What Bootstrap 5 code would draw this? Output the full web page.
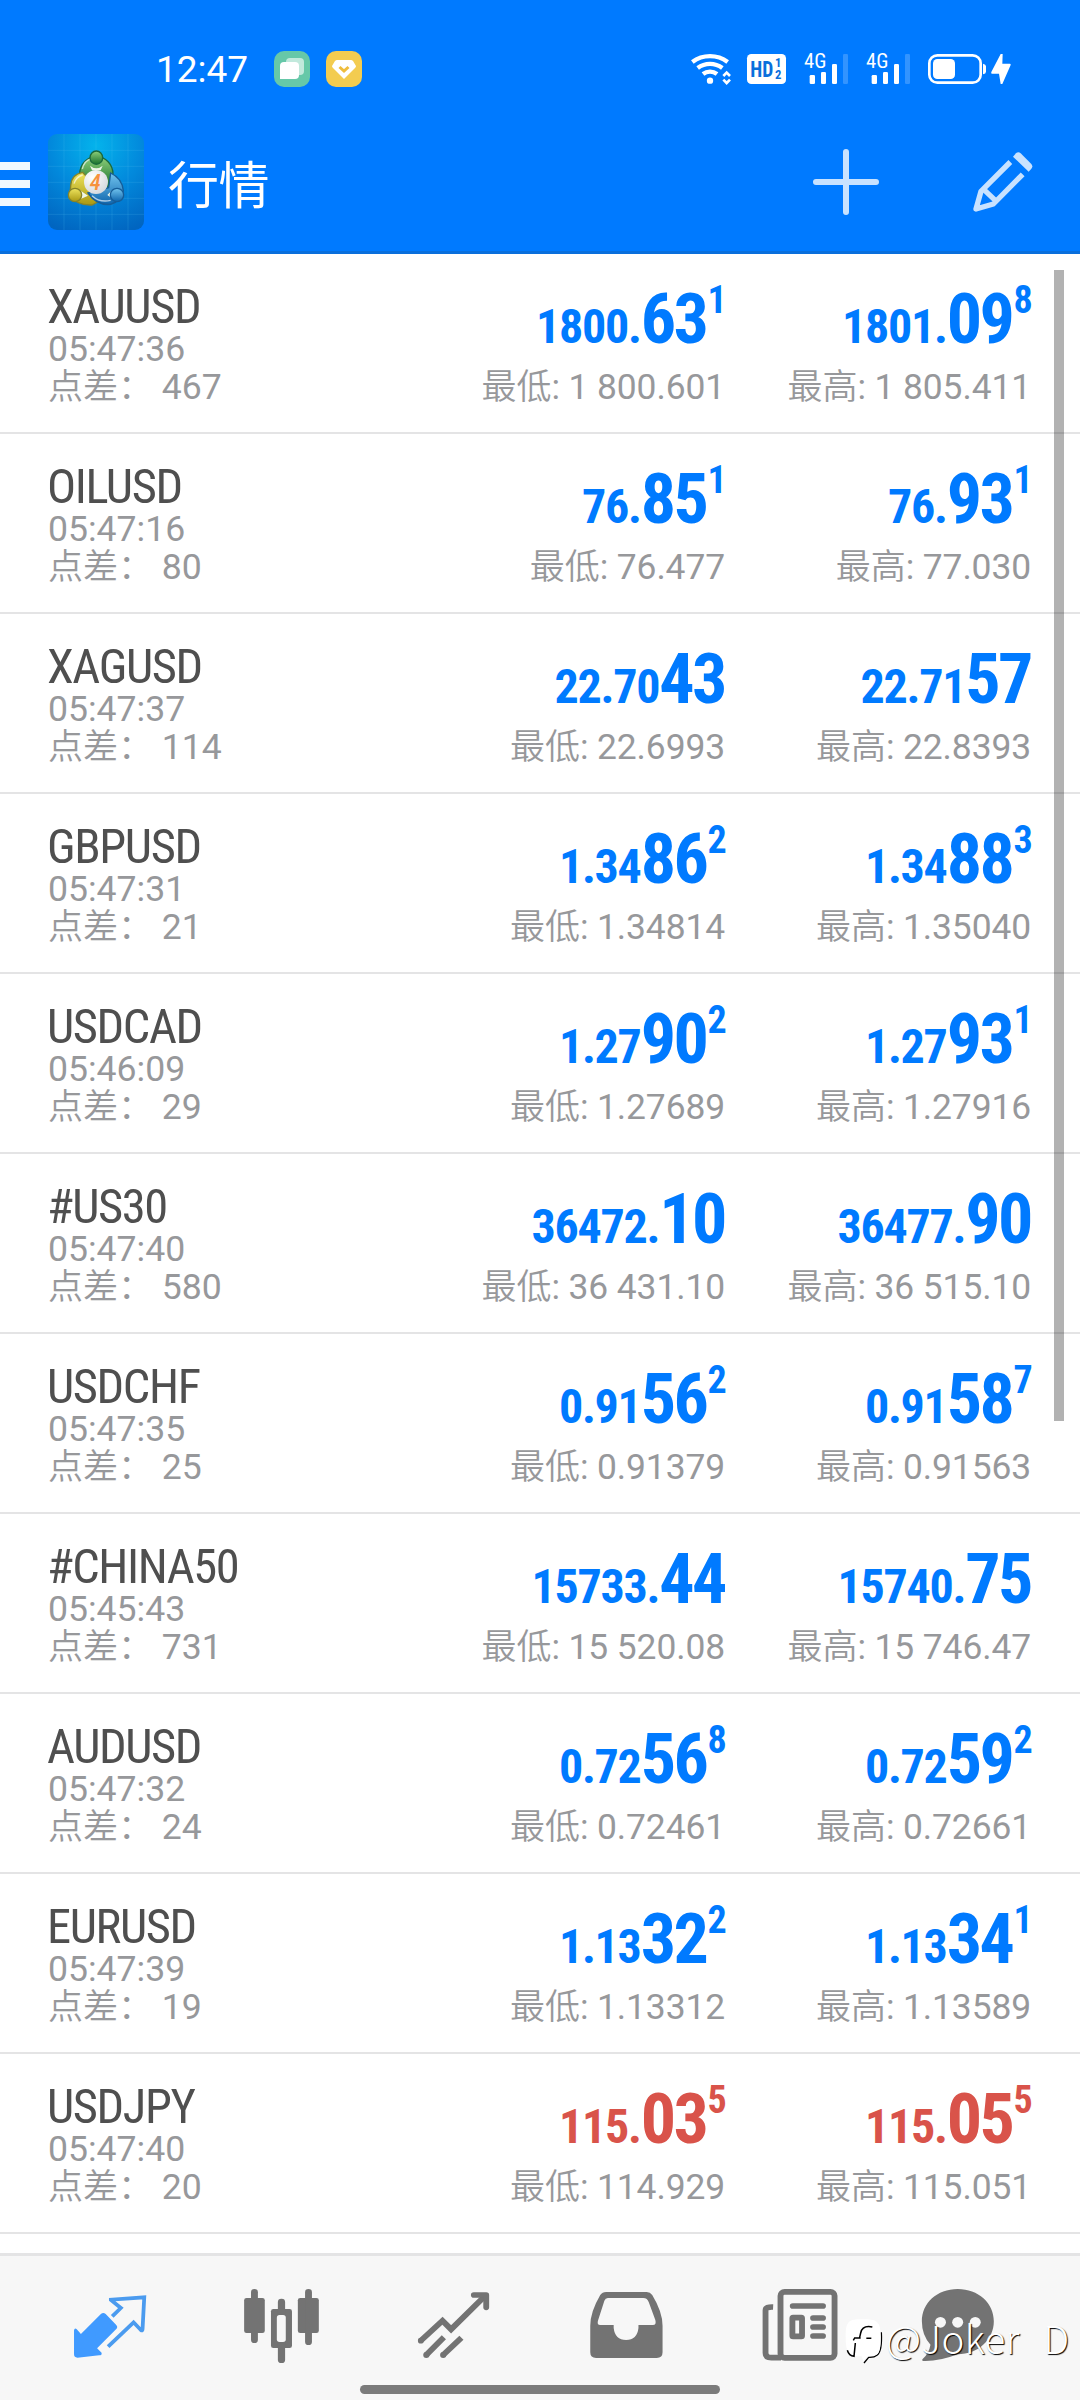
<!DOCTYPE html>
<html lang="zh-CN">
<head>
<meta charset="utf-8">
<meta name="viewport" content="width=device-width, initial-scale=1">
<title>行情</title>
<link href="https://cdn.jsdelivr.net/npm/bootstrap@5.3.0/dist/css/bootstrap.min.css" rel="stylesheet">
<style>
body{font-family:Roboto,"Noto Sans CJK SC",sans-serif;width:1080px;height:2400px;overflow:hidden;background:#fff;color:#97989b}
svg{display:block;flex:none;overflow:visible}
.topbar{background:#007aff;border-bottom:3px solid #0a6fdc;height:254px;color:#fff}
.statusbar{height:113px;padding:45px 66px 0 156px}
.clock{font-size:37px;line-height:49px;width:118px}
.titlebar{height:138px}
.page-title{font:400 51px/60px "Noto Sans CJK SC",sans-serif;margin-left:24px;letter-spacing:-.5px}
.quotes{height:1999px;overflow:hidden}
.quote{height:180px;border-bottom:2px solid #e4e4e5;padding:0 49px 0 48px;font-size:35.6px;line-height:38px;white-space:nowrap}
.sym{font-stretch:75%;font-size:48.5px;line-height:47px;letter-spacing:-1.4px;color:#4f4f4f;padding-top:29px;margin-left:-1px}
.cn{font-size:35px;font-weight:350}
.quote-col{width:306px}
.quote-col .range{font-size:35.4px;letter-spacing:-.1px;line-height:39px}
.spread{white-space:pre;line-height:39px}
.price{color:#007aff;font-stretch:75%;font-weight:700;font-size:48px;line-height:79px;letter-spacing:-1.25px;padding-top:33px;margin-bottom:2px}
.price b{font-size:70px;line-height:0;letter-spacing:-2.5px;font-weight:700}
.price i{font-style:normal;font-size:38px;line-height:0;vertical-align:30px;letter-spacing:-1.6px;margin-left:1px}
.down .price{color:#d9534a}
.thumb{right:16px;top:16px;width:10px;height:1151px;background:rgba(0,0,0,.3)}
.tabs{height:147px;border-top:3px solid #e4e4e5;background:#f7f7f7;padding:24px 24px 0;color:#737373}
.tab-item{width:172px}
.homebar{left:360px;top:129px;width:360px;height:9px;border-radius:5px;background:#7b7b7b}
.wmark{left:844px;top:63px;color:#fff;font:300 38.5px/48px "Noto Sans CJK SC",sans-serif;text-shadow:1px 1px 1px #000;white-space:pre}
.wmark span{margin:-9px 0 0 -3px;letter-spacing:.3px;word-spacing:3px}
</style>
<script src="https://cdn.jsdelivr.net/npm/bootstrap@5.3.0/dist/js/bootstrap.bundle.min.js"></script>
</head>
<body class="position-relative">
<header class="topbar">
  <div class="statusbar d-flex align-items-start">
    <div class="clock">12:47</div>
    <svg width="36" height="36" viewBox="0 0 36 36" style="margin-top:6px"><rect width="36" height="36" rx="10" fill="#66c8a8"/><rect x="12" y="7" width="18" height="17" rx="4" fill="#fff" opacity=".6"/><path d="M6 28V15a4 4 0 0 1 4-4h11a4 4 0 0 1 4 4v9a4 4 0 0 1-4 4z" fill="#fff"/></svg>
    <svg class="ms-3" width="36" height="36" viewBox="0 0 36 36" style="margin-top:6px"><rect width="36" height="36" rx="10" fill="#f3cc50"/><path d="M11 9h14q1 0 2 1l3 5q0 1-1 2L18 28 7 17q-1-1-1-2l3-5q1-1 2-1z" fill="#fff"/><path d="M13.500 16l4.500 4 4.500-4" fill="none" stroke="#efbd3c" stroke-width="3"/></svg>
    <div class="d-flex ms-auto">
      <svg width="55" height="50" viewBox="30 0 165 150" fill="none" stroke="#fff" stroke-width="13"><path d="M37 51a88 88 0 0 1 106 0M53 69a62 62 0 0 1 74 0M69 87a34 34 0 0 1 42 0"/><circle cx="90" cy="107" r="9.500" fill="#fff" stroke="none"/><path d="M130 93l10-10 10 10M130 104l10 10 10-10" stroke-width="8"/></svg>
      <svg width="55" height="50" viewBox="195 0 165 150"><rect x="201" y="27" width="117" height="90" rx="13" fill="#fff"/><g fill="#0a6fdc" font-family="Roboto" font-weight="700" style="font-stretch:75%"><text x="211" y="96" font-size="67" textLength="69" lengthAdjust="spacingAndGlyphs">HD</text><text x="285" y="66" font-size="38">1</text><text x="285" y="102" font-size="38">2</text></g></svg>
      <svg width="62" height="50" viewBox="360 0 186 150" fill="#fff"><text x="372" y="70" font-family="Roboto" font-size="60" style="font-stretch:75%" textLength="67" lengthAdjust="spacingAndGlyphs">4G</text><rect x="389" y="90" width="16" height="27" rx="4"/><rect x="423" y="81" width="15" height="36" rx="4"/><rect x="456" y="57" width="15" height="60" rx="4"/><rect x="489" y="27" width="15" height="90" rx="4" opacity=".2"/></svg>
      <svg width="62" height="50" viewBox="360 0 186 150" fill="#fff"><text x="372" y="70" font-family="Roboto" font-size="60" style="font-stretch:75%" textLength="67" lengthAdjust="spacingAndGlyphs">4G</text><rect x="389" y="90" width="16" height="27" rx="4"/><rect x="423" y="81" width="15" height="36" rx="4"/><rect x="456" y="57" width="15" height="60" rx="4"/><rect x="489" y="27" width="15" height="90" rx="4" opacity=".2"/></svg>
      <svg width="90" height="50" viewBox="732 0 270 150" fill="#fff"><rect x="748" y="31" width="154" height="82" rx="24" fill="none" stroke="#fff" stroke-width="8"/><rect x="759" y="42" width="66" height="60" rx="13"/><path d="M909 56q9 2 9 8v16q0 6-9 8zM962 27l-28 54q-2 5 2 5h21l5 31h5l25-57q1-4-3-4h-22l1-29z"/></svg>
    </div>
  </div>
  <div class="titlebar d-flex align-items-center">
    <svg width="48" height="44" viewBox="0 0 48 44" fill="#f0f8ff"><path d="M0 2h30v8H0zM0 20h30v8H0zM0 38h30v8H0z"/></svg>
    <svg width="96" height="96" viewBox="24 27 288 288">
      <defs>
        <radialGradient id="sky" cx=".5" cy=".12" r=".95"><stop offset="0" stop-color="#04b3ec"/><stop offset=".5" stop-color="#0289dc"/><stop offset="1" stop-color="#0165c0"/></radialGradient>
        <linearGradient id="gr" x2="0" y2="1"><stop stop-color="#8fd07b"/><stop offset="1" stop-color="#17702c"/></linearGradient>
        <linearGradient id="ye" x2="0" y2="1"><stop stop-color="#eee45e"/><stop offset="1" stop-color="#a99812"/></linearGradient>
        <linearGradient id="bl" x2="0" y2="1"><stop stop-color="#72c4ee"/><stop offset="1" stop-color="#0e65ad"/></linearGradient>
        <radialGradient id="ball" cx=".35" cy=".3" r=".75"><stop offset="0" stop-color="#fff"/><stop offset="1" stop-color="#d4d8dd"/></radialGradient>
      </defs>
      <rect x="24" y="27" width="288" height="288" rx="27" fill="url(#sky)"/>
      <path d="M72 27v288M120 27v288M168 27v288M216 27v288M264 27v288M24 76h288M24 124h288M24 172h288M24 220h288M24 268h288" stroke="#5cc6f5" stroke-opacity=".18" stroke-width="3"/>
      <g stroke-width="4">
        <path d="M119 148a49 52 0 1 1 100 0q-2 26-14 38l-72-14q-14-8-14-24z" fill="url(#gr)" stroke="#1b6a3c"/>
        <path d="M128 142q-34 6-36 40l-2 30q20 30 66 28l26-14-38-66z" fill="url(#ye)" stroke="#85832a"/>
        <path d="M212 144q34 16 38 52-4 30-38 42-42 4-68-34l62-16z" fill="url(#bl)" stroke="#155d99"/>
        <path d="M127 132q6-26 26-30M102 176q6-20 26-26M156 212q24 22 56 14" fill="none" stroke="#fff" stroke-opacity=".65"/>
        <path d="M150 122q19 16 38 0l-6 14h-26zM120 196l24 16-22 10zM216 196l-14 14 12 8z" fill="#eef6e8" stroke="none"/>
        <ellipse cx="169" cy="98" rx="19" ry="20" fill="url(#gr)" stroke="#1b6a3c"/>
        <circle cx="105" cy="210" r="20" fill="url(#ye)" stroke="#85832a"/>
        <circle cx="231" cy="210" r="20" fill="url(#bl)" stroke="#155d99"/>
      </g>
      <circle cx="168" cy="171" r="36" fill="url(#ball)"/>
      <text x="166" y="195" text-anchor="middle" font-family="Roboto" font-style="italic" font-weight="500" font-size="68" style="font-stretch:75%" fill="#f6923d">4</text>
    </svg>
    <div class="page-title">行情</div>
    <svg class="ms-auto" width="66" height="66" viewBox="459 357 198 198" stroke="#c8e2ff" stroke-width="18" stroke-linecap="round"><path d="M468 456h180M558 366v180"/></svg>
    <svg width="60" height="60" viewBox="938 365 180 180" style="margin:0 47px 0 94px" fill="none" stroke="#c8e2ff" stroke-width="16" stroke-linejoin="round"><path d="M1050 395l-88 88-15 53 52-15 88-89M970 477l38 36"/><path d="M1058 379l9-10q7-6 14 0l32 32q6 7 0 14l-8 9z" fill="#c8e2ff" stroke="none"/></svg>
  </div>
</header>
<main class="quotes position-relative">
  <section class="quote d-flex"><div class="me-auto"><div class="sym">XAUUSD</div><div>05:47:36</div><div class="spread"><span class="cn">点差：</span> 467</div></div><div class="quote-col text-end"><div class="price">1800.<b>63</b><i>1</i></div><div class="range"><span class="cn">最低</span>: 1 800.601</div></div><div class="quote-col text-end"><div class="price">1801.<b>09</b><i>8</i></div><div class="range"><span class="cn">最高</span>: 1 805.411</div></div></section>
  <section class="quote d-flex"><div class="me-auto"><div class="sym">OILUSD</div><div>05:47:16</div><div class="spread"><span class="cn">点差：</span> 80</div></div><div class="quote-col text-end"><div class="price">76.<b>85</b><i>1</i></div><div class="range"><span class="cn">最低</span>: 76.477</div></div><div class="quote-col text-end"><div class="price">76.<b>93</b><i>1</i></div><div class="range"><span class="cn">最高</span>: 77.030</div></div></section>
  <section class="quote d-flex"><div class="me-auto"><div class="sym">XAGUSD</div><div>05:47:37</div><div class="spread"><span class="cn">点差：</span> 114</div></div><div class="quote-col text-end"><div class="price">22.70<b>43</b></div><div class="range"><span class="cn">最低</span>: 22.6993</div></div><div class="quote-col text-end"><div class="price">22.71<b>57</b></div><div class="range"><span class="cn">最高</span>: 22.8393</div></div></section>
  <section class="quote d-flex"><div class="me-auto"><div class="sym">GBPUSD</div><div>05:47:31</div><div class="spread"><span class="cn">点差：</span> 21</div></div><div class="quote-col text-end"><div class="price">1.34<b>86</b><i>2</i></div><div class="range"><span class="cn">最低</span>: 1.34814</div></div><div class="quote-col text-end"><div class="price">1.34<b>88</b><i>3</i></div><div class="range"><span class="cn">最高</span>: 1.35040</div></div></section>
  <section class="quote d-flex"><div class="me-auto"><div class="sym">USDCAD</div><div>05:46:09</div><div class="spread"><span class="cn">点差：</span> 29</div></div><div class="quote-col text-end"><div class="price">1.27<b>90</b><i>2</i></div><div class="range"><span class="cn">最低</span>: 1.27689</div></div><div class="quote-col text-end"><div class="price">1.27<b>93</b><i>1</i></div><div class="range"><span class="cn">最高</span>: 1.27916</div></div></section>
  <section class="quote d-flex"><div class="me-auto"><div class="sym">#US30</div><div>05:47:40</div><div class="spread"><span class="cn">点差：</span> 580</div></div><div class="quote-col text-end"><div class="price">36472.<b>10</b></div><div class="range"><span class="cn">最低</span>: 36 431.10</div></div><div class="quote-col text-end"><div class="price">36477.<b>90</b></div><div class="range"><span class="cn">最高</span>: 36 515.10</div></div></section>
  <section class="quote d-flex"><div class="me-auto"><div class="sym">USDCHF</div><div>05:47:35</div><div class="spread"><span class="cn">点差：</span> 25</div></div><div class="quote-col text-end"><div class="price">0.91<b>56</b><i>2</i></div><div class="range"><span class="cn">最低</span>: 0.91379</div></div><div class="quote-col text-end"><div class="price">0.91<b>58</b><i>7</i></div><div class="range"><span class="cn">最高</span>: 0.91563</div></div></section>
  <section class="quote d-flex"><div class="me-auto"><div class="sym">#CHINA50</div><div>05:45:43</div><div class="spread"><span class="cn">点差：</span> 731</div></div><div class="quote-col text-end"><div class="price">15733.<b>44</b></div><div class="range"><span class="cn">最低</span>: 15 520.08</div></div><div class="quote-col text-end"><div class="price">15740.<b>75</b></div><div class="range"><span class="cn">最高</span>: 15 746.47</div></div></section>
  <section class="quote d-flex"><div class="me-auto"><div class="sym">AUDUSD</div><div>05:47:32</div><div class="spread"><span class="cn">点差：</span> 24</div></div><div class="quote-col text-end"><div class="price">0.72<b>56</b><i>8</i></div><div class="range"><span class="cn">最低</span>: 0.72461</div></div><div class="quote-col text-end"><div class="price">0.72<b>59</b><i>2</i></div><div class="range"><span class="cn">最高</span>: 0.72661</div></div></section>
  <section class="quote d-flex"><div class="me-auto"><div class="sym">EURUSD</div><div>05:47:39</div><div class="spread"><span class="cn">点差：</span> 19</div></div><div class="quote-col text-end"><div class="price">1.13<b>32</b><i>2</i></div><div class="range"><span class="cn">最低</span>: 1.13312</div></div><div class="quote-col text-end"><div class="price">1.13<b>34</b><i>1</i></div><div class="range"><span class="cn">最高</span>: 1.13589</div></div></section>
  <section class="quote down d-flex"><div class="me-auto"><div class="sym">USDJPY</div><div>05:47:40</div><div class="spread"><span class="cn">点差：</span> 20</div></div><div class="quote-col text-end"><div class="price">115.<b>03</b><i>5</i></div><div class="range"><span class="cn">最低</span>: 114.929</div></div><div class="quote-col text-end"><div class="price">115.<b>05</b><i>5</i></div><div class="range"><span class="cn">最高</span>: 115.051</div></div></section>
  <div class="thumb position-absolute"></div>
</main>
<nav class="tabs d-flex position-relative">
  <div class="tab-item d-flex justify-content-center"><svg width="84" height="90" viewBox="197.500 180 244 270" preserveAspectRatio="none"><path d="M215 331q2-9 8-3l12 14 58-60q7-6 14 0l30 32q7 7 0 14l-55 57 13 13q2 8-7 8l-63 7q-10 0-10-10z" fill="#409aff"/><path d="M326 289l25-25-29-24v-1l97-7-5 96q0 6-5 2l-21-23-74 73" fill="none" stroke="#4b9bef" stroke-width="11"/></svg></div>
  <div class="tab-item d-flex justify-content-center"><svg width="84" height="90" viewBox="697 180 244 270" preserveAspectRatio="none" fill="currentColor"><rect x="709" y="234" width="60" height="105" rx="7"/><rect x="729" y="207" width="20" height="162" rx="10"/><rect x="865" y="234" width="61" height="105" rx="7"/><rect x="886" y="207" width="20" height="168" rx="10"/><rect x="787" y="267" width="61" height="117" rx="7"/><rect x="807" y="236" width="21" height="193" rx="10"/><rect x="804" y="285" width="26" height="81" rx="8" fill="#f7f7f7"/></svg></div>
  <div class="tab-item d-flex justify-content-center"><svg width="84" height="90" viewBox="1196.400 180 244 270" preserveAspectRatio="none" fill="none" stroke="currentColor" stroke-width="17"><path d="M1221 363l64-61 25 26 99-101" stroke-linejoin="miter"/><circle cx="1222" cy="362" r="8.500" fill="currentColor" stroke="none"/><path d="M1376 225h36v37" stroke-linecap="round" stroke-linejoin="round"/><path d="M1237 406l52-54M1286 406l54-53"/><g fill="currentColor" stroke="none"><circle cx="1238" cy="405" r="9"/><circle cx="1287" cy="405" r="9"/></g></svg></div>
  <div class="tab-item d-flex justify-content-center"><svg width="84" height="90" viewBox="127.800 180 244 270" preserveAspectRatio="none" fill="currentColor"><path fill-rule="evenodd" d="M192 216h118q10 0 16 9 30 51 30 92v80q0 17-17 17H163q-17 0-17-17v-80q0-41 29-92 6-9 17-9zm5 18q-7 0-10 8l-18 58q-5 15 6 15h39v9q4 36 36 36t36-36v-9h42q11 0 7-15l-19-53q-4-13-16-13z"/></svg></div>
  <div class="tab-item d-flex justify-content-center"><svg width="84" height="90" viewBox="627.300 180 244 270" preserveAspectRatio="none" fill="none" stroke="currentColor" stroke-width="17"><rect x="698.500" y="215.500" width="157" height="198" rx="12"/><path d="M677 261q-22-1-22 10v127q0 15 17 15h28"/><path d="M734 258h88M793 294h29M793 321h29M793 348h29" stroke-linecap="round"/><rect x="733" y="293" width="28" height="56" rx="2"/></svg></div>
  <div class="tab-item d-flex justify-content-center"><svg width="84" height="90" viewBox="1126.800 180 244 270" preserveAspectRatio="none"><path d="M1213 207c60 0 105 42 105 97s-45 99-105 99q-55 22-101 20-5-3 0-7 18-17 22-42-25-28-25-70c0-55 44-97 104-97z" fill="currentColor"/><g fill="#f7f7f7"><circle cx="1163" cy="307" r="16"/><circle cx="1213" cy="307" r="16"/><circle cx="1264" cy="307" r="16"/></g></svg></div>
  <div class="homebar position-absolute"></div>
  <div class="wmark position-absolute d-flex align-items-center"><svg width="45" height="44" viewBox="12 64 135 132"><path d="M124 104q3 56-12 68-10 8-26 7l-14 17" fill="none" stroke="#000" stroke-width="4"/><path d="M66 65c45 0 56 4 56 52s-5 58-33 58q-8 0-19 15l-5-14c-37 0-48-9-48-58s10-53 49-53z" fill="#fff"/><path d="M97 88q-30-6-35 18l-3 13M79 122h15M40 128l4-7h18M22 158q5 17 20 18l4-40" fill="none" stroke="#000" stroke-width="4.500"/></svg><span>@Joker  D</span></div>
</nav>
</body>
</html>
